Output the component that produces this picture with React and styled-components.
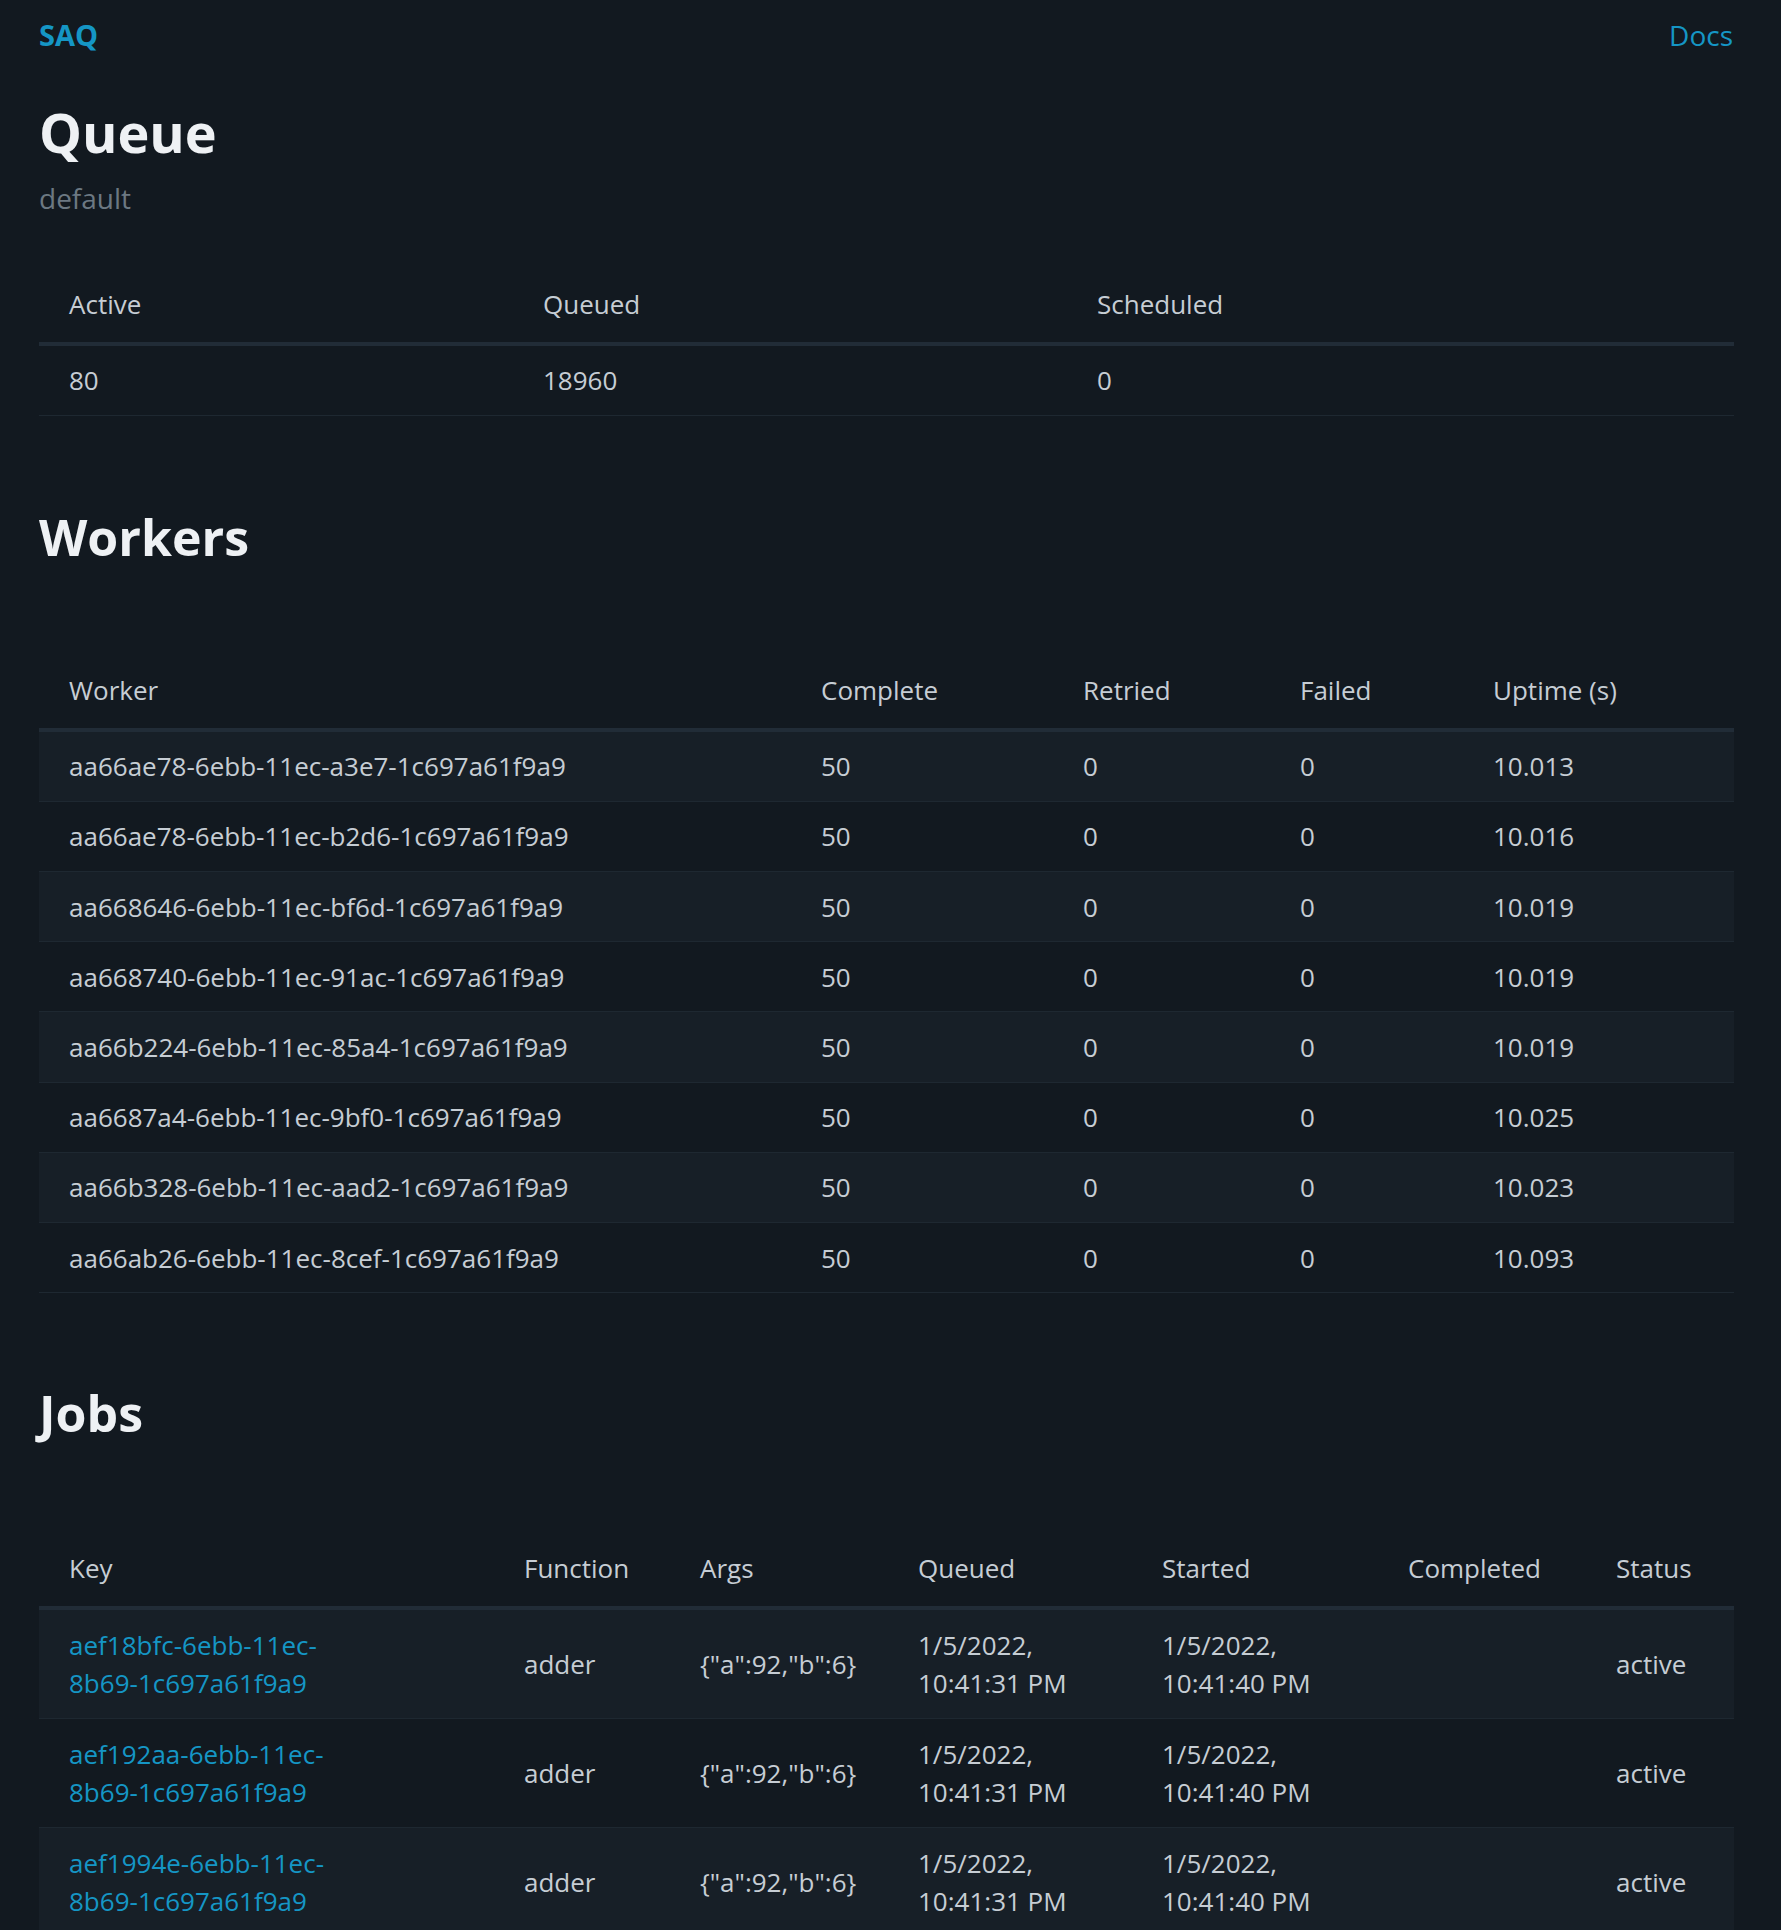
import React from 'react';
import styled, { createGlobalStyle } from 'styled-components';

const GlobalStyle = createGlobalStyle`
  html, body {
    margin: 0;
    padding: 0;
    background: #121920;
  }
  body {
    font-family: "Open Sans", "Noto Sans", sans-serif;
    color: #c6cdd4;
  }
`;

const Page = styled.div`
  padding: 0 48px 40px 39px;
`;

const Nav = styled.nav`
  display: flex;
  justify-content: space-between;
  align-items: center;
  padding-top: 16px;
`;

const Brand = styled.a`
  font-size: 29px;
  line-height: 38px;
  font-weight: 700;
  color: #1596c5;
  text-decoration: none;
`;

const NavLink = styled.a`
  font-size: 28px;
  line-height: 38px;
  color: #1596c5;
  text-decoration: none;
`;

const Title = styled.h1`
  margin: 48px 0 0;
  font-size: 54px;
  line-height: 60px;
  font-weight: 700;
  color: #eef1f4;
`;

const Subtitle = styled.div`
  margin-top: 17px;
  font-size: 28px;
  line-height: 38px;
  color: #6c7882;
`;

const SectionTitle = styled.h2`
  margin: ${p => p.$gap}px 0 0;
  font-size: 50px;
  line-height: 60px;
  font-weight: 700;
  color: #eef1f4;
`;

const Table = styled.table`
  width: 100%;
  margin-top: ${p => p.$gap}px;
  border-collapse: collapse;
  table-layout: fixed;
  font-size: 26px;
  line-height: ${p => p.$lh || 38.5}px;
`;

const Th = styled.th`
  text-align: left;
  font-weight: 400;
  color: #c6cdd4;
  padding: 13.2px 12px 18.8px 30px;
  border-bottom: 4px solid #212c37;
  vertical-align: middle;
`;

const Row = styled.tr`
  background: ${p => (p.$striped ? '#171f27' : 'transparent')};
  border-bottom: 1px solid #1e2831;
`;

const Td = styled.td`
  padding: 15.5px 12px 15.5px 30px;
  vertical-align: middle;
  color: #c6cdd4;
`;

const KeyLink = styled.a`
  display: inline-block;
  max-width: 270px;
  color: #1596c5;
  text-decoration: none;
`;

const Cols = ({ widths }) => (
  <colgroup>
    {widths.map((w, i) => (
      <col key={i} style={{ width: w }} />
    ))}
  </colgroup>
);

const workers = [
  ['aa66ae78-6ebb-11ec-a3e7-1c697a61f9a9', '10.013'],
  ['aa66ae78-6ebb-11ec-b2d6-1c697a61f9a9', '10.016'],
  ['aa668646-6ebb-11ec-bf6d-1c697a61f9a9', '10.019'],
  ['aa668740-6ebb-11ec-91ac-1c697a61f9a9', '10.019'],
  ['aa66b224-6ebb-11ec-85a4-1c697a61f9a9', '10.019'],
  ['aa6687a4-6ebb-11ec-9bf0-1c697a61f9a9', '10.025'],
  ['aa66b328-6ebb-11ec-aad2-1c697a61f9a9', '10.023'],
  ['aa66ab26-6ebb-11ec-8cef-1c697a61f9a9', '10.093'],
];

const jobs = [
  'aef18bfc-6ebb-11ec-8b69-1c697a61f9a9',
  'aef192aa-6ebb-11ec-8b69-1c697a61f9a9',
  'aef1994e-6ebb-11ec-8b69-1c697a61f9a9',
];

const BreakableKey = ({ value }) => {
  const parts = value.split('-');
  return (
    <>
      {parts.map((p, i) => (
        <React.Fragment key={i}>
          {p}
          {i < parts.length - 1 && (
            <>
              -<wbr />
            </>
          )}
        </React.Fragment>
      ))}
    </>
  );
};

export default function App() {
  return (
    <>
      <GlobalStyle />
      <Page>
        <Nav>
          <Brand href="#">SAQ</Brand>
          <NavLink href="#">Docs</NavLink>
        </Nav>

        <Title>Queue</Title>
        <Subtitle>default</Subtitle>

        <Table $gap={54.5}>
          <Cols widths={[474, 554, 667]} />
          <thead>
            <tr>
              <Th>Active</Th>
              <Th>Queued</Th>
              <Th>Scheduled</Th>
            </tr>
          </thead>
          <tbody>
            <Row>
              <Td>80</Td>
              <Td>18960</Td>
              <Td>0</Td>
            </Row>
          </tbody>
        </Table>

        <SectionTitle $gap={90.5}>Workers</SectionTitle>
        <Table $gap={90.5} $lh={38.2}>
          <Cols widths={[752, 262, 217, 193, 271]} />
          <thead>
            <tr>
              <Th>Worker</Th>
              <Th>Complete</Th>
              <Th>Retried</Th>
              <Th>Failed</Th>
              <Th>Uptime (s)</Th>
            </tr>
          </thead>
          <tbody>
            {workers.map(([id, up], i) => (
              <Row key={id + i} $striped={i % 2 === 0}>
                <Td>{id}</Td>
                <Td>50</Td>
                <Td>0</Td>
                <Td>0</Td>
                <Td>{up}</Td>
              </Row>
            ))}
          </tbody>
        </Table>

        <SectionTitle $gap={90}>Jobs</SectionTitle>
        <Table $gap={92.5}>
          <Cols widths={[455, 176, 218, 244, 246, 208, 148]} />
          <thead>
            <tr>
              <Th>Key</Th>
              <Th>Function</Th>
              <Th>Args</Th>
              <Th>Queued</Th>
              <Th>Started</Th>
              <Th>Completed</Th>
              <Th>Status</Th>
            </tr>
          </thead>
          <tbody>
            {jobs.map((k, i) => (
              <Row key={k} $striped={i % 2 === 0}>
                <Td>
                  <KeyLink href="#">
                    <BreakableKey value={k} />
                  </KeyLink>
                </Td>
                <Td>adder</Td>
                <Td>{'{"a":92,"b":6}'}</Td>
                <Td>1/5/2022, 10:41:31 PM</Td>
                <Td>1/5/2022, 10:41:40 PM</Td>
                <Td></Td>
                <Td>active</Td>
              </Row>
            ))}
          </tbody>
        </Table>
      </Page>
    </>
  );
}
